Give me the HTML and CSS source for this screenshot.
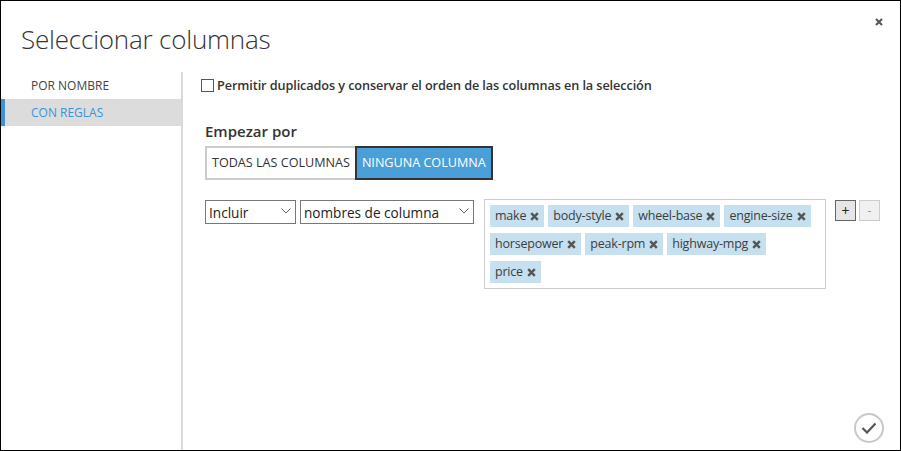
FILE: index.html
```html
<!DOCTYPE html>
<html lang="es">
<head>
<meta charset="utf-8">
<title>Seleccionar columnas</title>
<link rel="stylesheet" href="styles.css">
</head>
<body>
<div class="dialog">
  <button class="close" aria-label="Cerrar">
    <svg width="8" height="8" viewBox="0 0 8 8"><path d="M1 1L7 7M7 1L1 7" stroke="#555" stroke-width="2"/></svg>
  </button>
  <h1 class="title">Seleccionar columnas</h1>
  <div class="main">
    <nav class="sidebar">
      <div class="nav-item">POR NOMBRE</div>
      <div class="nav-item active">CON REGLAS</div>
    </nav>
    <section class="content">
      <label class="dup"><span class="box"></span>Permitir duplicados y conservar el orden de las columnas en la selección</label>
      <div class="start">
        <h2 class="start-title">Empezar por</h2>
        <div class="toggle">
          <span class="opt">TODAS LAS COLUMNAS</span>
          <span class="opt on">NINGUNA COLUMNA</span>
        </div>
      </div>
      <div class="rule">
        <div class="select s1"><span>Incluir</span><svg width="10" height="6" viewBox="0 0 10 6"><path d="M0.5 0.5L5 5L9.5 0.5" fill="none" stroke="#666" stroke-width="1"/></svg></div>
        <div class="select s2"><span>nombres de columna</span><svg width="10" height="6" viewBox="0 0 10 6"><path d="M0.5 0.5L5 5L9.5 0.5" fill="none" stroke="#666" stroke-width="1"/></svg></div>
        <div class="tags">
          <span class="tag">make<i></i></span>
          <span class="tag">body-style<i></i></span>
          <span class="tag">wheel-base<i></i></span>
          <span class="tag">engine-size<i></i></span>
          <span class="tag">horsepower<i></i></span>
          <span class="tag">peak-rpm<i></i></span>
          <span class="tag">highway-mpg<i></i></span>
          <span class="tag">price<i></i></span>
        </div>
        <div class="pm">
          <span class="btn plus">+</span>
          <span class="btn minus">-</span>
        </div>
      </div>
    </section>
  </div>
  <button class="ok" aria-label="Aceptar">
    <svg width="16" height="12" viewBox="0 0 16 12"><path d="M1.5 6L6 10.5L14.5 1.5" fill="none" stroke="#555" stroke-width="2.2"/></svg>
  </button>
</div>
</body>
</html>
```
FILE: styles.css
```css
* { box-sizing: border-box; }
html, body { margin: 0; padding: 0; background: #fff; }
body { font-family: "Open Sans", "Noto Sans", sans-serif; color: #333; }
.dialog {
  position: relative;
  width: 901px;
  height: 451px;
  border: 1px solid #000;
  display: flex;
  flex-direction: column;
  overflow: hidden;
}
.close {
  position: absolute;
  top: 16px;
  right: 16px;
  width: 10px;
  height: 10px;
  padding: 0;
  border: 0;
  background: none;
  display: flex;
  align-items: center;
  justify-content: center;
}
.title {
  margin: 0;
  padding: 20px 0 0 20px;
  height: 71px;
  font-weight: 300;
  font-size: 26px;
  line-height: 36px;
  color: #333;
  letter-spacing: -0.2px;
}
.main { flex: 1; display: flex; }
.sidebar {
  width: 182px;
  border-right: 2px solid #d9d9d9;
  flex-shrink: 0;
}
.nav-item {
  height: 27px;
  line-height: 27px;
  padding-left: 30px;
  font-size: 12px;
  color: #444;
}
.nav-item.active {
  background: #dcdcdc;
  color: #3b93d9;
  border-left: 4px solid #3b93d9;
  padding-left: 26px;
}
.content { flex: 1; padding: 5px 0 0 18px; }
.dup {
  display: flex;
  align-items: center;
  font-size: 12.7px;
  font-weight: 600;
  color: #333;
  height: 16px;
  letter-spacing: -0.1px;
}
.box {
  width: 13px;
  height: 13px;
  border: 1px solid #555;
  margin-right: 3px;
  background: #fff;
}
.start { padding: 28px 0 0 4px; }
.start-title {
  margin: 0;
  font-size: 15px;
  font-weight: 600;
  line-height: 20px;
  color: #333;
}
.toggle { display: flex; margin-top: 5px; }
.opt {
  height: 34px;
  line-height: 30px;
  padding: 0 5px;
  font-size: 12.6px;
  border: 2px solid #ccc;
  color: #333;
}
.opt:first-child { border-right: 0; }
.opt.on {
  background: #4a9fd8;
  border-color: #333;
  color: #fff;
}
.rule {
  display: flex;
  align-items: flex-start;
  margin-top: 20px;
  padding-left: 4px;
}
.select {
  height: 24px;
  border: 1px solid #777;
  display: flex;
  align-items: center;
  justify-content: space-between;
  padding: 0 4px 0 3px;
  font-size: 13.6px;
  color: #222;
  margin-right: 4px;
}
.select svg { margin-top: -3px; flex-shrink: 0; }
.s1 { width: 91px; }
.s2 { width: 174px; }
.tags {
  margin-left: 6px;
  width: 342px;
  height: 90px;
  border: 1px solid #ccc;
  padding: 5px 5px;
  display: flex;
  flex-wrap: wrap;
  align-content: flex-start;
  gap: 6px 4px;
  margin-top: -1px;
}
.tag {
  height: 22px;
  line-height: 22px;
  background: #c6e0ef;
  padding: 0 5px;
  font-size: 12.5px;
  color: #3d3d3d;
  display: flex;
  align-items: center;
  letter-spacing: -0.2px;
}
.tag i {
  width: 9px;
  height: 9px;
  margin-left: 4px;
  background: no-repeat center/9px 9px;
  background-image: url("data:image/svg+xml,%3Csvg xmlns='http://www.w3.org/2000/svg' viewBox='0 0 9 9'%3E%3Cpath d='M1.2 1.2L7.8 7.8M7.8 1.2L1.2 7.8' stroke='%23555' stroke-width='2.4'/%3E%3C/svg%3E");
}
.pm { display: flex; gap: 3px; margin-left: 9px; }
.btn {
  width: 21px;
  height: 21px;
  display: flex;
  align-items: center;
  justify-content: center;
  font-size: 14px;
  line-height: 1;
}
.plus { background: #e6e6e6; border: 1px solid #666; color: #222; }
.minus { background: #f0f0f0; border: 1px solid #ccc; color: #999; font-size: 12px; }
.ok {
  position: absolute;
  right: 16px;
  bottom: 7px;
  width: 30px;
  height: 30px;
  border-radius: 50%;
  border: 2px solid #c8c8c8;
  background: #fff;
  padding: 0;
  display: flex;
  align-items: center;
  justify-content: center;
}
```
